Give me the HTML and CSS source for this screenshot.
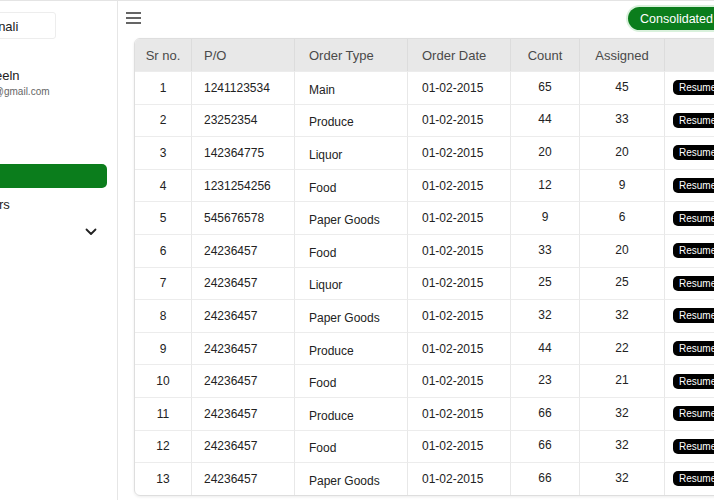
FILE: index.html
```html
<!DOCTYPE html>
<html lang="en">
<head>
  <meta charset="UTF-8">
  <meta name="viewport" content="width=device-width, initial-scale=1.0">
  <title>Orders</title>
  <link rel="stylesheet" href="styles.css">
</head>
<body>
  <div class="app">
    <!-- Sidebar -->
    <aside class="sidebar">
      <div class="brand">Shonali</div>
      <div class="profile">
        <div class="profile-name">Jaya Sheeln</div>
        <div class="profile-email">jayasheeln@gmail.com</div>
      </div>
      <nav class="menu">
        <a class="menu-item active">Home</a>
        <a class="menu-item">Orders</a>
        <div class="menu-item dropdown">
          <span>More</span>
          <svg class="chevron" width="12" height="8" viewBox="0 0 12 8"><path d="M1.5 1.5 L6 6 L10.5 1.5" fill="none" stroke="#222" stroke-width="1.8" stroke-linecap="round" stroke-linejoin="round"/></svg>
        </div>
      </nav>
    </aside>

    <!-- Main -->
    <main class="main">
      <div class="topbar">
        <svg class="hamburger" width="15" height="12" viewBox="0 0 15 12"><path d="M0 1h15M0 6h15M0 11h15" stroke="#333" stroke-width="1.6"/></svg>
        <button class="btn-consolidated">Consolidated</button>
      </div>

      <div class="table-wrap">
        <table class="orders">
          <thead>
            <tr>
              <th class="c-sr">Sr no.</th>
              <th class="c-po">P/O</th>
              <th class="c-type">Order Type</th>
              <th class="c-date">Order Date</th>
              <th class="c-num">Count</th>
              <th class="c-num c-assigned">Assigned</th>
              <th class="c-action"></th>
            </tr>
          </thead>
          <tbody>
            <tr><td class="c-sr">1</td><td class="c-po">1241123534</td><td class="c-type">Main</td><td class="c-date">01-02-2015</td><td class="c-num">65</td><td class="c-num">45</td><td class="c-action"><span class="btn-resume">Resume</span></td></tr>
            <tr><td class="c-sr">2</td><td class="c-po">23252354</td><td class="c-type">Produce</td><td class="c-date">01-02-2015</td><td class="c-num">44</td><td class="c-num">33</td><td class="c-action"><span class="btn-resume">Resume</span></td></tr>
            <tr><td class="c-sr">3</td><td class="c-po">142364775</td><td class="c-type">Liquor</td><td class="c-date">01-02-2015</td><td class="c-num">20</td><td class="c-num">20</td><td class="c-action"><span class="btn-resume">Resume</span></td></tr>
            <tr><td class="c-sr">4</td><td class="c-po">1231254256</td><td class="c-type">Food</td><td class="c-date">01-02-2015</td><td class="c-num">12</td><td class="c-num">9</td><td class="c-action"><span class="btn-resume">Resume</span></td></tr>
            <tr><td class="c-sr">5</td><td class="c-po">545676578</td><td class="c-type">Paper Goods</td><td class="c-date">01-02-2015</td><td class="c-num">9</td><td class="c-num">6</td><td class="c-action"><span class="btn-resume">Resume</span></td></tr>
            <tr><td class="c-sr">6</td><td class="c-po">24236457</td><td class="c-type">Food</td><td class="c-date">01-02-2015</td><td class="c-num">33</td><td class="c-num">20</td><td class="c-action"><span class="btn-resume">Resume</span></td></tr>
            <tr><td class="c-sr">7</td><td class="c-po">24236457</td><td class="c-type">Liquor</td><td class="c-date">01-02-2015</td><td class="c-num">25</td><td class="c-num">25</td><td class="c-action"><span class="btn-resume">Resume</span></td></tr>
            <tr><td class="c-sr">8</td><td class="c-po">24236457</td><td class="c-type">Paper Goods</td><td class="c-date">01-02-2015</td><td class="c-num">32</td><td class="c-num">32</td><td class="c-action"><span class="btn-resume">Resume</span></td></tr>
            <tr><td class="c-sr">9</td><td class="c-po">24236457</td><td class="c-type">Produce</td><td class="c-date">01-02-2015</td><td class="c-num">44</td><td class="c-num">22</td><td class="c-action"><span class="btn-resume">Resume</span></td></tr>
            <tr><td class="c-sr">10</td><td class="c-po">24236457</td><td class="c-type">Food</td><td class="c-date">01-02-2015</td><td class="c-num">23</td><td class="c-num">21</td><td class="c-action"><span class="btn-resume">Resume</span></td></tr>
            <tr><td class="c-sr">11</td><td class="c-po">24236457</td><td class="c-type">Produce</td><td class="c-date">01-02-2015</td><td class="c-num">66</td><td class="c-num">32</td><td class="c-action"><span class="btn-resume">Resume</span></td></tr>
            <tr><td class="c-sr">12</td><td class="c-po">24236457</td><td class="c-type">Food</td><td class="c-date">01-02-2015</td><td class="c-num">66</td><td class="c-num">32</td><td class="c-action"><span class="btn-resume">Resume</span></td></tr>
            <tr><td class="c-sr">13</td><td class="c-po">24236457</td><td class="c-type">Paper Goods</td><td class="c-date">01-02-2015</td><td class="c-num">66</td><td class="c-num">32</td><td class="c-action"><span class="btn-resume">Resume</span></td></tr>
          </tbody>
        </table>
      </div>
    </main>
  </div>
</body>
</html>
```

FILE: styles.css
```css
body {
  margin: 0;
  font-family: "Liberation Sans", Arial, sans-serif;
  color: #222;
  background: #fff;
  overflow: hidden;
}

.app {
  display: flex;
  margin-left: -60px; /* page is scrolled a bit to the right */
  height: 500px;
  border-top: 1px solid #e4e4e4;
  box-sizing: border-box;
}

/* Sidebar */
.sidebar {
  width: 178px;
  flex-shrink: 0;
  padding: 11px 10px 0 14px;
  box-sizing: border-box;
  border-right: 1px solid #e6e6e6;
}

.brand {
  width: 102px;
  height: 27px;
  line-height: 27px;
  padding-left: 20px;
  box-sizing: border-box;
  border: 1px solid #ededed;
  border-radius: 3px;
  font-size: 13px;
}

.profile {
  margin: 29px 0 0 -6px;
}

.profile-name {
  font-size: 13px;
  line-height: 16px;
}

.profile-email {
  font-size: 10px;
  line-height: 13px;
  color: #666;
  margin: 1px 0 0 -2px;
}

.menu {
  margin-top: 66px;
  display: flex;
  flex-direction: column;
  gap: 4px;
}

.menu-item {
  display: flex;
  align-items: center;
  justify-content: space-between;
  height: 24px;
  padding: 0 10px 0 16px;
  border-radius: 5px;
  font-size: 13px;
  color: #222;
}

.menu-item.active {
  background: #0b7d1c;
  color: #fff;
  padding-left: 8px;
}

.dropdown span {
  visibility: hidden;
}

.chevron {
  display: block;
}

/* Main */
.main {
  width: 660px;
  flex-shrink: 0;
  padding: 0 14px 0 8px;
}

.topbar {
  display: flex;
  align-items: center;
  justify-content: space-between;
  padding-top: 6px;
  height: 23px;
}

.hamburger {
  display: block;
  margin-top: -2px;
}

.btn-consolidated {
  height: 23px;
  padding: 0 12px;
  margin-right: 61px;
  border: none;
  border-radius: 12px;
  background: #0b7d1c;
  color: #fff;
  font-family: inherit;
  font-size: 12.5px;
  box-shadow: 0 0 0 2px #d9f1dc;
}

.table-wrap {
  margin: 8px 0 0 8px;
  border: 1px solid #dedede;
  border-radius: 6px;
  overflow: hidden;
  box-shadow: 0 1px 3px rgba(0, 0, 0, 0.08);
}

.orders {
  width: 100%;
  border-collapse: separate;
  border-spacing: 0;
  table-layout: fixed;
  font-size: 12px;
}

.orders th,
.orders td {
  box-sizing: border-box;
}

.orders th {
  height: 32px;
  background: #e8e8e8;
  color: #4a4a4a;
  font-size: 13px;
  font-weight: normal;
  text-align: left;
  border-right: 1px solid #dcdcdc;
}

.orders td {
  height: 32.6px;
  border-right: 1px solid #e8e8e8;
  border-top: 1px solid #ececec;
  vertical-align: middle;
}

.orders th:last-child,
.orders td:last-child {
  border-right: none;
}

.c-sr { width: 57px; text-align: center !important; padding: 0; }
.c-po { width: 103px; padding: 0 0 0 12px; }
.c-type { width: 113px; padding: 0 0 0 14px; }
.c-date { width: 103px; padding: 0 0 0 14px; }
.c-num { width: 69px; text-align: center !important; padding: 0; }
.c-assigned { width: 85px; }
.c-action { padding: 0 0 0 8px; }

.orders td.c-type {
  padding-top: 4px;
}

.orders td.c-num {
  padding-bottom: 2px;
}

.btn-resume {
  display: inline-block;
  background: #000;
  color: #fff;
  font-size: 10px;
  line-height: 15px;
  padding: 0 6px;
  border-radius: 5px;
}
```
